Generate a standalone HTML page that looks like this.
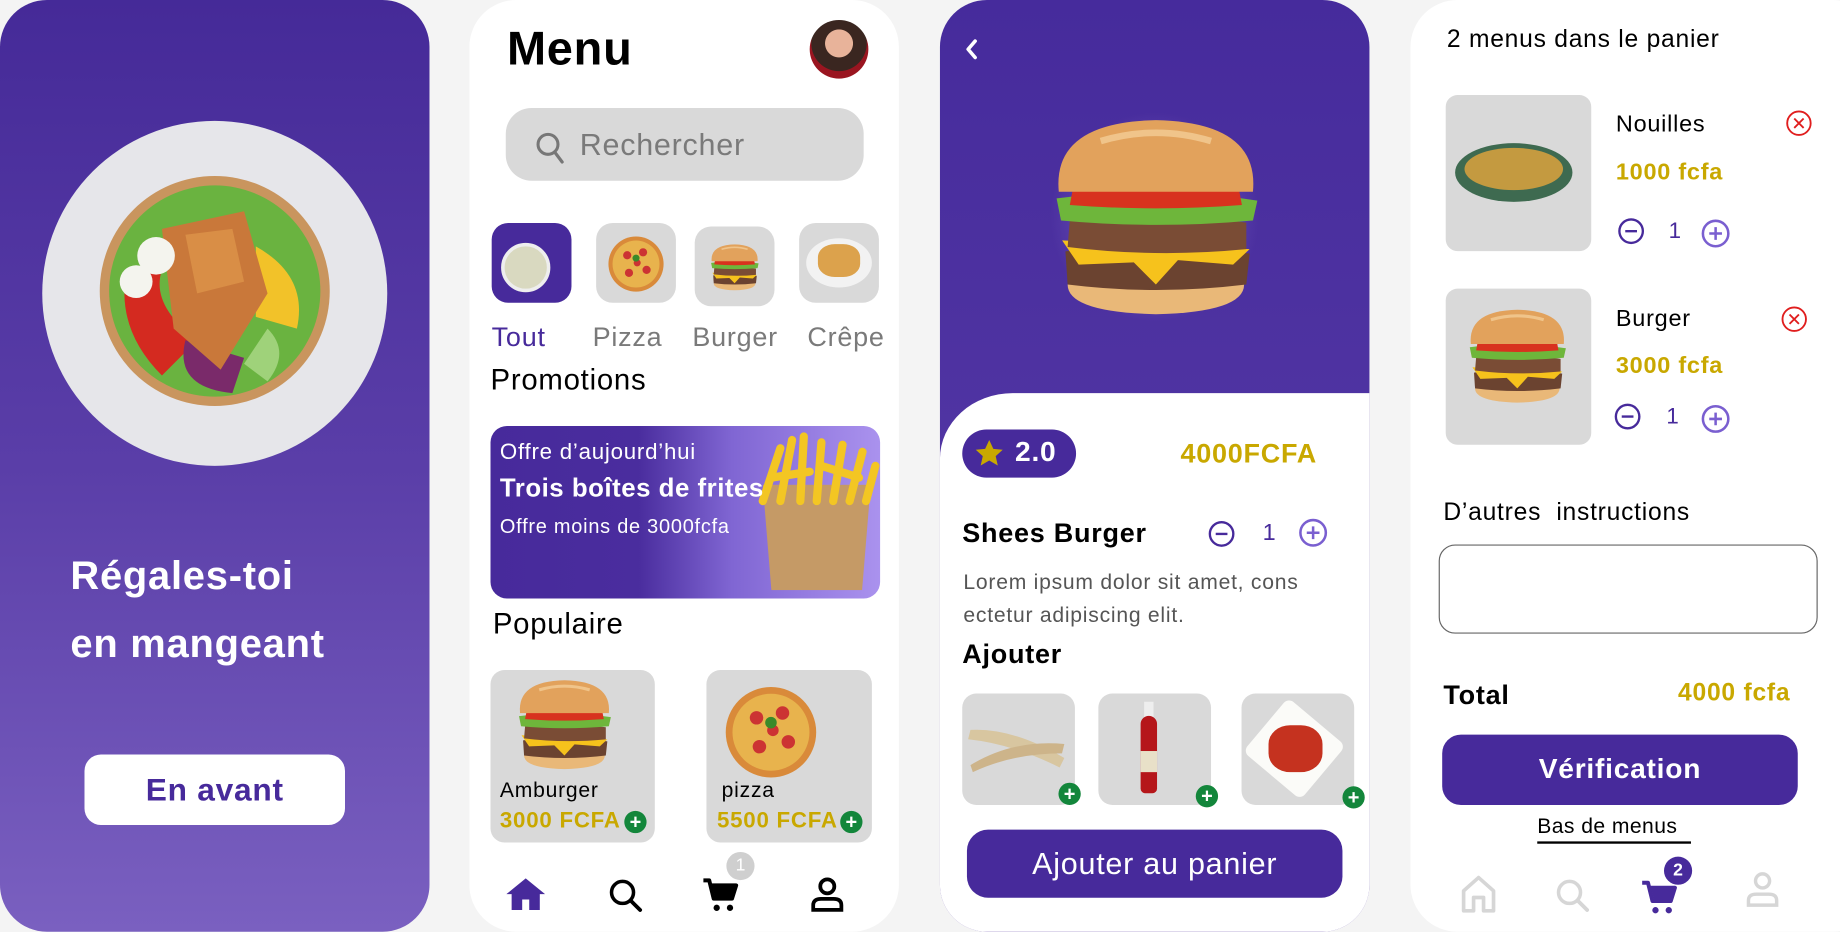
<!DOCTYPE html>
<html><head><meta charset="utf-8">
<style>
*{margin:0;padding:0;box-sizing:border-box}
html,body{width:1840px;height:932px;overflow:hidden;background:#f4f4f4;font-family:"Liberation Sans",sans-serif}
#w{position:absolute;left:0;top:0;width:1568px;height:794px;transform:scale(1.17347);transform-origin:0 0;letter-spacing:0.04em}
.a{position:absolute}
.t{position:absolute;white-space:nowrap;line-height:1}
.panel{position:absolute;top:0;height:794px;border-radius:40px;overflow:hidden}
.gray{background:#d9d9d9}
.gold{color:#c9a800;font-weight:bold}
.plus{position:absolute;width:19px;height:19px;border-radius:50%;background:#13863b;color:#fff;font-weight:bold;font-size:17px;line-height:19px;text-align:center;letter-spacing:0}
</style></head><body>
<svg width="0" height="0" style="position:absolute">
<defs>
<symbol id="burger" viewBox="0 0 200 180">
<path d="M20 150 Q20 175 100 177 Q180 175 180 150 Z" fill="#e9b878"/>
<path d="M18 120 Q100 108 185 122 L182 150 Q100 160 20 150 Z" fill="#6b4330"/>
<path d="M15 110 L185 118 L170 132 L120 128 L100 150 L80 130 L30 132 Z" fill="#f6c21c"/>
<path d="M22 92 Q100 82 182 94 L182 118 Q100 126 20 116 Z" fill="#7a4c35"/>
<path d="M10 72 Q100 60 192 74 L188 92 Q100 100 14 92 Z" fill="#6eb63b"/>
<path d="M25 62 Q100 52 175 62 L178 78 Q100 84 22 78 Z" fill="#d8321e"/>
<path d="M12 66 Q6 3 100 1 Q194 3 188 66 Z" fill="#e2a25c"/>
<path d="M50 20 Q100 5 150 20" stroke="#f0c48a" stroke-width="6" fill="none"/>
</symbol>
<symbol id="pizza" viewBox="0 0 100 100">
<circle cx="50" cy="50" r="47" fill="#d98a3a"/><circle cx="50" cy="50" r="40" fill="#e8b34d"/>
<circle cx="35" cy="35" r="7" fill="#c33"/><circle cx="62" cy="30" r="7" fill="#c33"/><circle cx="68" cy="60" r="7" fill="#c33"/><circle cx="38" cy="65" r="7" fill="#c33"/><circle cx="52" cy="48" r="6" fill="#c33"/>
<circle cx="50" cy="40" r="6" fill="#3a8a2a"/>
</symbol>
<symbol id="cart" viewBox="0 0 24 24">
<path d="M1 3h3.5l2.7 11h11l2.5-8H6" fill="none" stroke="currentColor" stroke-width="2.4" stroke-linejoin="round"/>
<path d="M6.5 7h13.5l-2 6H8Z" fill="currentColor"/>
<circle cx="9" cy="19.5" r="1.9" fill="currentColor"/><circle cx="17" cy="19.5" r="1.9" fill="currentColor"/>
</symbol>
</defs></svg>
<div id="w">

<!-- Panel 1 -->
<div class="panel" style="left:0;width:366px;background:linear-gradient(180deg,#452a98 0%,#5a3ea8 50%,#7a60c0 100%)">
  <div class="a" style="left:36px;top:103px;width:294px;height:294px;border-radius:50%;background:#e6e6ea"></div>
  <svg class="a" style="left:78px;top:140px" width="210" height="210" viewBox="0 0 210 210">
    <circle cx="105" cy="108" r="98" fill="#c9955e"/>
    <circle cx="105" cy="108" r="90" fill="#6ab340"/>
    <path d="M30 90 Q20 140 60 180 L90 150 Q50 120 60 90Z" fill="#d42a20"/>
    <path d="M80 150 Q70 190 120 195 L130 165Z" fill="#7a2a6a"/>
    <path d="M140 70 Q185 95 175 140 L140 130Z" fill="#f2c229"/>
    <path d="M60 55 L130 40 L150 110 L110 175 L70 140Z" fill="#c9783a"/>
    <path d="M80 60 L120 55 L130 100 L90 110Z" fill="#d98e46"/>
    <circle cx="55" cy="78" r="16" fill="#f4f4ee"/><circle cx="38" cy="100" r="14" fill="#f4f4ee"/>
    <path d="M150 140 Q170 160 150 185 L130 170Z" fill="#9fd27a"/>
  </svg>
  <div class="t" style="left:60px;top:474px;font-size:34px;font-weight:bold;color:#fff">Régales-toi</div>
  <div class="t" style="left:60px;top:532px;font-size:34px;font-weight:bold;color:#fff">en mangeant</div>
  <div class="a" style="left:72px;top:643px;width:222px;height:60px;background:#fff;border-radius:14px;text-align:center;line-height:60px;font-size:27px;font-weight:bold;color:#472a9b">En avant</div>
</div>

<!-- Panel 2 -->
<div class="panel" style="left:400px;width:366px;background:#fff">
  <div class="t" style="left:32px;top:22px;font-size:40px;font-weight:bold;color:#000">Menu</div>
  <div class="a" style="left:290px;top:17px;width:50px;height:50px;border-radius:50%;background:radial-gradient(circle at 50% 40%,#e8b39a 0 30%,#3a2620 31% 60%,#9a1520 61%)"></div>
  <div class="a" style="left:31px;top:92px;width:305px;height:62px;border-radius:22px;background:#d9d9d9"></div>
  <svg class="a" style="left:56px;top:112px" width="26" height="28" viewBox="0 0 26 28"><circle cx="11" cy="11" r="8.5" fill="none" stroke="#777" stroke-width="2.6"/><path d="M17 18l6 8" stroke="#777" stroke-width="2.8" stroke-linecap="round"/></svg>
  <div class="t" style="left:94px;top:110px;font-size:26px;color:#7a7a7a">Rechercher</div>
  <div class="a" style="left:19px;top:190px;width:68px;height:68px;border-radius:14px;background:#472a9b"></div>
  <div class="a" style="left:27px;top:207px;width:42px;height:42px;border-radius:50%;background:#d9d9c0;border:3px solid #eee"></div>
  <div class="a" style="left:108px;top:190px;width:68px;height:68px;border-radius:14px;background:#d9d9d9"></div>
  <svg class="a" style="left:112px;top:200px" width="60" height="50"><use href="#pizza" x="5" y="0" width="50" height="50"/></svg>
  <div class="a" style="left:192px;top:193px;width:68px;height:68px;border-radius:14px;background:#d9d9d9"></div>
  <svg class="a" style="left:200px;top:208px" width="52" height="40"><use href="#burger" width="52" height="40"/></svg>
  <div class="a" style="left:281px;top:190px;width:68px;height:68px;border-radius:14px;background:#d9d9d9"></div>
  <div class="a" style="left:287px;top:203px;width:56px;height:42px;border-radius:50%;background:#f2f2f2"></div>
  <div class="a" style="left:297px;top:208px;width:36px;height:28px;border-radius:40%;background:#dca24c"></div>
  <div class="t" style="left:19px;top:276px;font-size:23px;color:#472a9b">Tout</div>
  <div class="t" style="left:105px;top:276px;font-size:23px;color:#7a7a7a">Pizza</div>
  <div class="t" style="left:190px;top:276px;font-size:23px;color:#7a7a7a">Burger</div>
  <div class="t" style="left:288px;top:276px;font-size:23px;color:#7a7a7a">Crêpe</div>
  <div class="t" style="left:18px;top:312px;font-size:25px;color:#000">Promotions</div>
  <div class="a" style="left:18px;top:363px;width:332px;height:147px;border-radius:14px;background:linear-gradient(90deg,#472a9b 0%,#4a2d9e 38%,#8066d3 62%,#aa92ee 100%);overflow:hidden">
    <div class="a" style="left:232px;top:50px;width:92px;height:90px;background:#c59a66;clip-path:polygon(0 0,100% 0,92% 100%,8% 100%)"></div>
    <svg class="a" style="left:222px;top:4px" width="112" height="64" viewBox="0 0 112 64"><g stroke="#f3c623" stroke-width="7" stroke-linecap="round"><path d="M10 60L25 15"/><path d="M25 60L35 8"/><path d="M42 60L45 5"/><path d="M56 60L60 10"/><path d="M70 60L78 12"/><path d="M84 60L95 18"/><path d="M98 60L106 30"/><path d="M18 40L50 35"/><path d="M60 30L92 40"/></g></svg>
  </div>
  <div class="t" style="left:26px;top:376px;font-size:19px;color:#fff">Offre d’aujourd’hui</div>
  <div class="t" style="left:26px;top:405px;font-size:22px;color:#fff;font-weight:bold;letter-spacing:0.02em">Trois boîtes de frites</div>
  <div class="t" style="left:26px;top:440px;font-size:17px;color:#fff">Offre moins de 3000fcfa</div>
  <div class="t" style="left:20px;top:520px;font-size:25px;color:#000">Populaire</div>
  <div class="a gray" style="left:18px;top:571px;width:140px;height:147px;border-radius:12px"></div>
  <svg class="a" style="left:38px;top:574px" width="86" height="88"><use href="#burger" width="86" height="88"/></svg>
  <div class="t" style="left:26px;top:664px;font-size:18px;color:#000">Amburger</div>
  <div class="t gold" style="left:26px;top:690px;font-size:19px">3000 FCFA</div>
  <div class="plus" style="left:132px;top:691px">+</div>
  <div class="a gray" style="left:202px;top:571px;width:141px;height:147px;border-radius:12px"></div>
  <svg class="a" style="left:210px;top:583px" width="94" height="82"><use href="#pizza" width="94" height="82"/></svg>
  <div class="t" style="left:215px;top:664px;font-size:18px;color:#000">pizza</div>
  <div class="t gold" style="left:211px;top:690px;font-size:19px">5500 FCFA</div>
  <div class="plus" style="left:316px;top:691px">+</div>
  <svg class="a" style="left:30px;top:747px" width="36" height="30" viewBox="0 0 24 20"><path d="M12 1L1 10h3v9h6v-6h4v6h6v-9h3Z" fill="#472a9b"/></svg>
  <svg class="a" style="left:118px;top:748px" width="30" height="30" viewBox="0 0 24 24"><circle cx="10" cy="10" r="7.5" fill="none" stroke="#000" stroke-width="2.4"/><path d="M15.5 15.5L22 22" stroke="#000" stroke-width="2.6" stroke-linecap="round"/></svg>
  <svg class="a" style="left:197px;top:746px;color:#000" width="36" height="34"><use href="#cart" width="36" height="34"/></svg>
  <div class="a" style="left:219px;top:726px;width:24px;height:24px;border-radius:50%;background:#cfcfcf;color:#fff;font-size:15px;text-align:center;line-height:24px;letter-spacing:0">1</div>
  <svg class="a" style="left:289px;top:746px" width="32" height="32" viewBox="0 0 24 24"><circle cx="12" cy="7" r="4.5" fill="none" stroke="#000" stroke-width="2.4"/><path d="M3 22v-3q0-4 5-4h8q5 0 5 4v3Z" fill="none" stroke="#000" stroke-width="2.4"/></svg>
</div>

<!-- Panel 3 -->
<div class="panel" style="left:801px;width:366px;background:linear-gradient(180deg,#462b9c 0%,#5a3ea9 100%)">
  <div class="a" style="left:183px;top:185px;width:180px;height:180px;transform:translate(-50%,-50%) rotate(45deg);background:radial-gradient(circle,rgba(170,150,230,.55),rgba(90,60,170,0) 70%)"></div>
  <svg class="a" style="left:20px;top:32px" width="14" height="20" viewBox="0 0 14 20"><path d="M10 3L4 10l6 7" fill="none" stroke="#fff" stroke-width="3" stroke-linecap="round" stroke-linejoin="round"/></svg>
  <svg class="a" style="left:90px;top:95px" width="188" height="182"><use href="#burger" width="188" height="182"/></svg>
  <div class="a" style="left:0;top:335px;width:366px;height:459px;background:#fff;border-top-left-radius:62px 56px"></div>
  <div class="a" style="left:19px;top:366px;width:97px;height:41px;border-radius:21px;background:#472a9b"></div>
  <svg class="a" style="left:30px;top:375px" width="24" height="22" viewBox="0 0 24 22"><path d="M12 0l3.5 7.5 8 .8-6 5.4 1.8 8-7.3-4.3-7.3 4.3 1.8-8-6-5.4 8-.8Z" fill="#c9a800"/></svg>
  <div class="t" style="left:64px;top:374px;font-size:24px;font-weight:bold;color:#fff">2.0</div>
  <div class="t gold" style="left:205px;top:375px;font-size:23px">4000FCFA</div>
  <div class="t" style="left:19px;top:443px;font-size:23px;font-weight:bold;color:#000">Shees Burger</div>
  <svg class="a" style="left:228px;top:443px" width="24" height="24" viewBox="0 0 24 24"><circle cx="12" cy="12" r="10" fill="none" stroke="#472a9b" stroke-width="2"/><path d="M7 12h10" stroke="#472a9b" stroke-width="2"/></svg>
  <div class="t" style="left:275px;top:444px;font-size:20px;color:#472a9b">1</div>
  <svg class="a" style="left:305px;top:441px" width="26" height="26" viewBox="0 0 24 24"><circle cx="12" cy="12" r="10" fill="none" stroke="#7a5fd0" stroke-width="2"/><path d="M7 12h10M12 7v10" stroke="#7a5fd0" stroke-width="2"/></svg>
  <div class="t" style="left:20px;top:482px;font-size:18px;color:#555;line-height:28px">Lorem ipsum dolor sit amet, cons<br>ectetur adipiscing elit.</div>
  <div class="t" style="left:19px;top:546px;font-size:23px;font-weight:bold;color:#000">Ajouter</div>
  <div class="a gray" style="left:19px;top:591px;width:96px;height:95px;border-radius:12px"></div>
  <svg class="a" style="left:22px;top:610px" width="88" height="50" viewBox="0 0 88 50"><path d="M4 12Q40 10 84 36L80 44Q40 24 2 20Z" fill="#d8c6a0"/><path d="M4 42Q40 20 84 24L82 32Q40 32 6 48Z" fill="#cdb48a"/></svg>
  <div class="plus" style="left:101px;top:667px">+</div>
  <div class="a gray" style="left:135px;top:591px;width:96px;height:95px;border-radius:12px"></div>
  <div class="a" style="left:174px;top:598px;width:8px;height:14px;background:#eee"></div>
  <div class="a" style="left:171px;top:610px;width:14px;height:66px;border-radius:7px 7px 4px 4px;background:#b5161a"></div>
  <div class="a" style="left:171px;top:640px;width:14px;height:18px;background:#e8e0c8"></div>
  <div class="plus" style="left:218px;top:669px">+</div>
  <div class="a gray" style="left:257px;top:591px;width:96px;height:95px;border-radius:12px"></div>
  <div class="a" style="left:270px;top:608px;width:64px;height:60px;background:#fbfbf8;transform:rotate(40deg);border-radius:6px"></div>
  <div class="a" style="left:280px;top:618px;width:46px;height:40px;background:#c5321f;border-radius:40%"></div>
  <div class="plus" style="left:343px;top:670px">+</div>
  <div class="a" style="left:23px;top:707px;width:320px;height:58px;border-radius:18px;background:#472a9b;text-align:center;line-height:58px;color:#fff;font-size:26px">Ajouter au panier</div>
</div>

<!-- Panel 4 -->
<div class="panel" style="left:1202px;width:400px;background:#fff">
  <div class="t" style="left:31px;top:23px;font-size:21px;color:#000">2 menus dans le panier</div>
  <div class="a gray" style="left:30px;top:81px;width:124px;height:133px;border-radius:10px"></div>
  <div class="a" style="left:38px;top:122px;width:100px;height:50px;border-radius:50%;background:#3e6a50"></div>
  <div class="a" style="left:46px;top:126px;width:84px;height:36px;border-radius:50%;background:#c49a40"></div>
  <div class="t" style="left:175px;top:96px;font-size:20px;color:#000">Nouilles</div>
  <svg class="a" style="left:319px;top:93px" width="24" height="24" viewBox="0 0 24 24"><circle cx="12" cy="12" r="10" fill="none" stroke="#e01e1e" stroke-width="1.6"/><path d="M8 8l8 8M16 8l-8 8" stroke="#e01e1e" stroke-width="1.6"/></svg>
  <div class="t gold" style="left:175px;top:137px;font-size:20px">1000 fcfa</div>
  <svg class="a" style="left:176px;top:185px" width="24" height="24" viewBox="0 0 24 24"><circle cx="12" cy="12" r="10" fill="none" stroke="#472a9b" stroke-width="2"/><path d="M7 12h10" stroke="#472a9b" stroke-width="2"/></svg>
  <div class="t" style="left:220px;top:188px;font-size:19px;color:#472a9b">1</div>
  <svg class="a" style="left:247px;top:186px" width="26" height="26" viewBox="0 0 24 24"><circle cx="12" cy="12" r="10" fill="none" stroke="#7a5fd0" stroke-width="2"/><path d="M7 12h10M12 7v10" stroke="#7a5fd0" stroke-width="2"/></svg>
  <div class="a gray" style="left:30px;top:246px;width:124px;height:133px;border-radius:10px"></div>
  <svg class="a" style="left:46px;top:262px" width="90" height="84"><use href="#burger" width="90" height="84"/></svg>
  <div class="t" style="left:175px;top:262px;font-size:20px;color:#000">Burger</div>
  <svg class="a" style="left:315px;top:260px" width="24" height="24" viewBox="0 0 24 24"><circle cx="12" cy="12" r="10" fill="none" stroke="#e01e1e" stroke-width="1.6"/><path d="M8 8l8 8M16 8l-8 8" stroke="#e01e1e" stroke-width="1.6"/></svg>
  <div class="t gold" style="left:175px;top:302px;font-size:20px">3000 fcfa</div>
  <svg class="a" style="left:173px;top:343px" width="24" height="24" viewBox="0 0 24 24"><circle cx="12" cy="12" r="10" fill="none" stroke="#472a9b" stroke-width="2"/><path d="M7 12h10" stroke="#472a9b" stroke-width="2"/></svg>
  <div class="t" style="left:218px;top:346px;font-size:19px;color:#472a9b">1</div>
  <svg class="a" style="left:247px;top:344px" width="26" height="26" viewBox="0 0 24 24"><circle cx="12" cy="12" r="10" fill="none" stroke="#7a5fd0" stroke-width="2"/><path d="M7 12h10M12 7v10" stroke="#7a5fd0" stroke-width="2"/></svg>
  <div class="t" style="left:28px;top:426px;font-size:21px;color:#000">D’autres&nbsp; instructions</div>
  <div class="a" style="left:24px;top:464px;width:323px;height:76px;border:1px solid #666;border-radius:14px"></div>
  <div class="t" style="left:28px;top:581px;font-size:23px;font-weight:bold;color:#000">Total</div>
  <div class="t gold" style="left:228px;top:580px;font-size:21px">4000 fcfa</div>
  <div class="a" style="left:27px;top:626px;width:303px;height:60px;border-radius:16px;background:#472a9b;text-align:center;line-height:60px;color:#fff;font-size:24px;font-weight:bold">Vérification</div>
  <div class="t" style="left:108px;top:695px;font-size:18px;color:#000;letter-spacing:0.02em">Bas de menus</div>
  <div class="a" style="left:108px;top:717px;width:131px;height:2px;background:#000"></div>
  <svg class="a" style="left:41px;top:745px" width="34" height="34" viewBox="0 0 24 24"><path d="M3 22V10l9-8 9 8v12h-6v-8H9v8Z" fill="none" stroke="#d6d6d6" stroke-width="2.2" stroke-linejoin="round"/></svg>
  <svg class="a" style="left:123px;top:748px" width="30" height="30" viewBox="0 0 24 24"><circle cx="10" cy="10" r="7.5" fill="none" stroke="#d6d6d6" stroke-width="2.4"/><path d="M15.5 15.5L22 22" stroke="#d6d6d6" stroke-width="2.6" stroke-linecap="round"/></svg>
  <svg class="a" style="left:196px;top:748px;color:#472a9b" width="34" height="34"><use href="#cart" width="34" height="34"/></svg>
  <div class="a" style="left:216px;top:730px;width:24px;height:24px;border-radius:50%;background:#472a9b;color:#fff;font-size:15px;font-weight:bold;text-align:center;line-height:24px;letter-spacing:0">2</div>
  <svg class="a" style="left:284px;top:742px" width="32" height="32" viewBox="0 0 24 24"><circle cx="12" cy="6.5" r="4.5" fill="none" stroke="#d6d6d6" stroke-width="2.2"/><path d="M3 22v-3q0-4 5-4h8q5 0 5 4v3Z" fill="none" stroke="#d6d6d6" stroke-width="2.2"/></svg>
</div>

</div>
</body></html>
